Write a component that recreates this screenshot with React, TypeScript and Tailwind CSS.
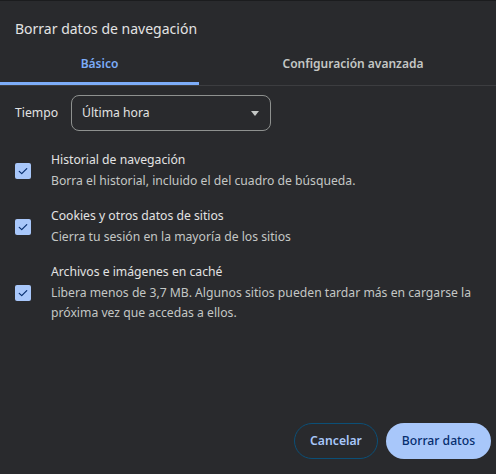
import React, { useState } from "react";

const items = [
  {
    title: "Historial de navegación",
    desc: "Borra el historial, incluido el del cuadro de búsqueda.",
  },
  {
    title: "Cookies y otros datos de sitios",
    desc: "Cierra tu sesión en la mayoría de los sitios",
  },
  {
    title: "Archivos e imágenes en caché",
    desc: "Libera menos de 3,7 MB. Algunos sitios pueden tardar más en cargarse la próxima vez que accedas a ellos.",
  },
];

const CheckBox: React.FC<{ checked: boolean; onToggle: () => void }> = ({ checked, onToggle }) => (
  <button
    onClick={onToggle}
    className={`w-4 h-4 rounded-[2px] flex items-center justify-center shrink-0 ${
      checked ? "bg-[#a8c7fa]" : "border-2 border-[#c4c7c5]"
    }`}
  >
    {checked && (
      <svg viewBox="0 0 16 16" className="w-3 h-3" fill="none">
        <path d="M3 8.5 L6.3 11.5 L13 4.8" stroke="#062e6f" strokeWidth="1.6" strokeLinecap="round" strokeLinejoin="round" />
      </svg>
    )}
  </button>
);

export default function App() {
  const [tab, setTab] = useState(0);
  const [checked, setChecked] = useState([true, true, true]);

  return (
    <div
      className="w-[496px] h-[474px] bg-[#292a2d] border-t border-[#1b1c1e] overflow-hidden flex flex-col text-[#e3e3e3]"
      style={{ fontFamily: '"Noto Sans", "Open Sans", sans-serif' }}
    >
      {/* Title */}
      <div className="px-[15px] pt-[17px] h-[44px] text-[14px] leading-[22px]">Borrar datos de navegación</div>

      {/* Tabs */}
      <div className="flex border-b border-[#3c3d40] h-[41px]">
        <button
          onClick={() => setTab(0)}
          className={`w-[199px] shrink-0 text-[12px] font-semibold flex flex-col justify-between ${
            tab === 0 ? "text-[#7cacf8]" : "text-[#c4c7c5]"
          }`}
        >
          <span className="pt-[10px]">Básico</span>
          <span className={`h-[3px] w-full ${tab === 0 ? "bg-[#7cacf8]" : ""}`} />
        </button>
        <button
          onClick={() => setTab(1)}
          className={`w-[308px] shrink-0 text-[12px] font-semibold flex flex-col justify-between ${
            tab === 1 ? "text-[#7cacf8]" : "text-[#c4c7c5]"
          }`}
        >
          <span className="pt-[10px]">Configuración avanzada</span>
          <span className={`h-[3px] w-full ${tab === 1 ? "bg-[#7cacf8]" : ""}`} />
        </button>
      </div>

      {/* Time range */}
      <div className="flex items-center gap-[13px] px-[15px] mt-[9px]">
        <span className="text-[12.2px]">Tiempo</span>
        <div className="w-[200px] h-[36px] rounded-[8px] border border-[#8e918f] flex items-center justify-between pl-[10px] pr-[11px] text-[12.2px]">
          <span>Última hora</span>
          <svg viewBox="0 0 10 6" className="w-[8px] h-[5px]">
            <path d="M0 0 L10 0 L5 6 Z" fill="#c4c7c5" />
          </svg>
        </div>
      </div>

      {/* Options */}
      <div className="flex flex-col gap-[15px] mt-[19px] px-[15px]">
        {items.map((it, i) => (
          <div key={it.title} className="flex items-center gap-[20px]">
            <CheckBox
              checked={checked[i]}
              onToggle={() => setChecked(checked.map((c, j) => (j === i ? !c : c)))}
            />
            <div className="text-[12.2px] leading-[20.5px]">
              <div className="text-[#e3e3e3]">{it.title}</div>
              <div className="text-[#c4c7c5]">{it.desc}</div>
            </div>
          </div>
        ))}
      </div>

      {/* Buttons */}
      <div className="mt-auto flex justify-end gap-[8px] pr-[5px] pb-[15px]">
        <button className="h-[36px] w-[84px] rounded-full border border-[#0b4f77] text-[#a8c7fa] text-[12.2px] font-semibold">
          Cancelar
        </button>
        <button className="h-[36px] w-[105px] rounded-full bg-[#a8c7fa] text-[#062e6f] text-[12.2px] font-medium">
          Borrar datos
        </button>
      </div>
    </div>
  );
}
